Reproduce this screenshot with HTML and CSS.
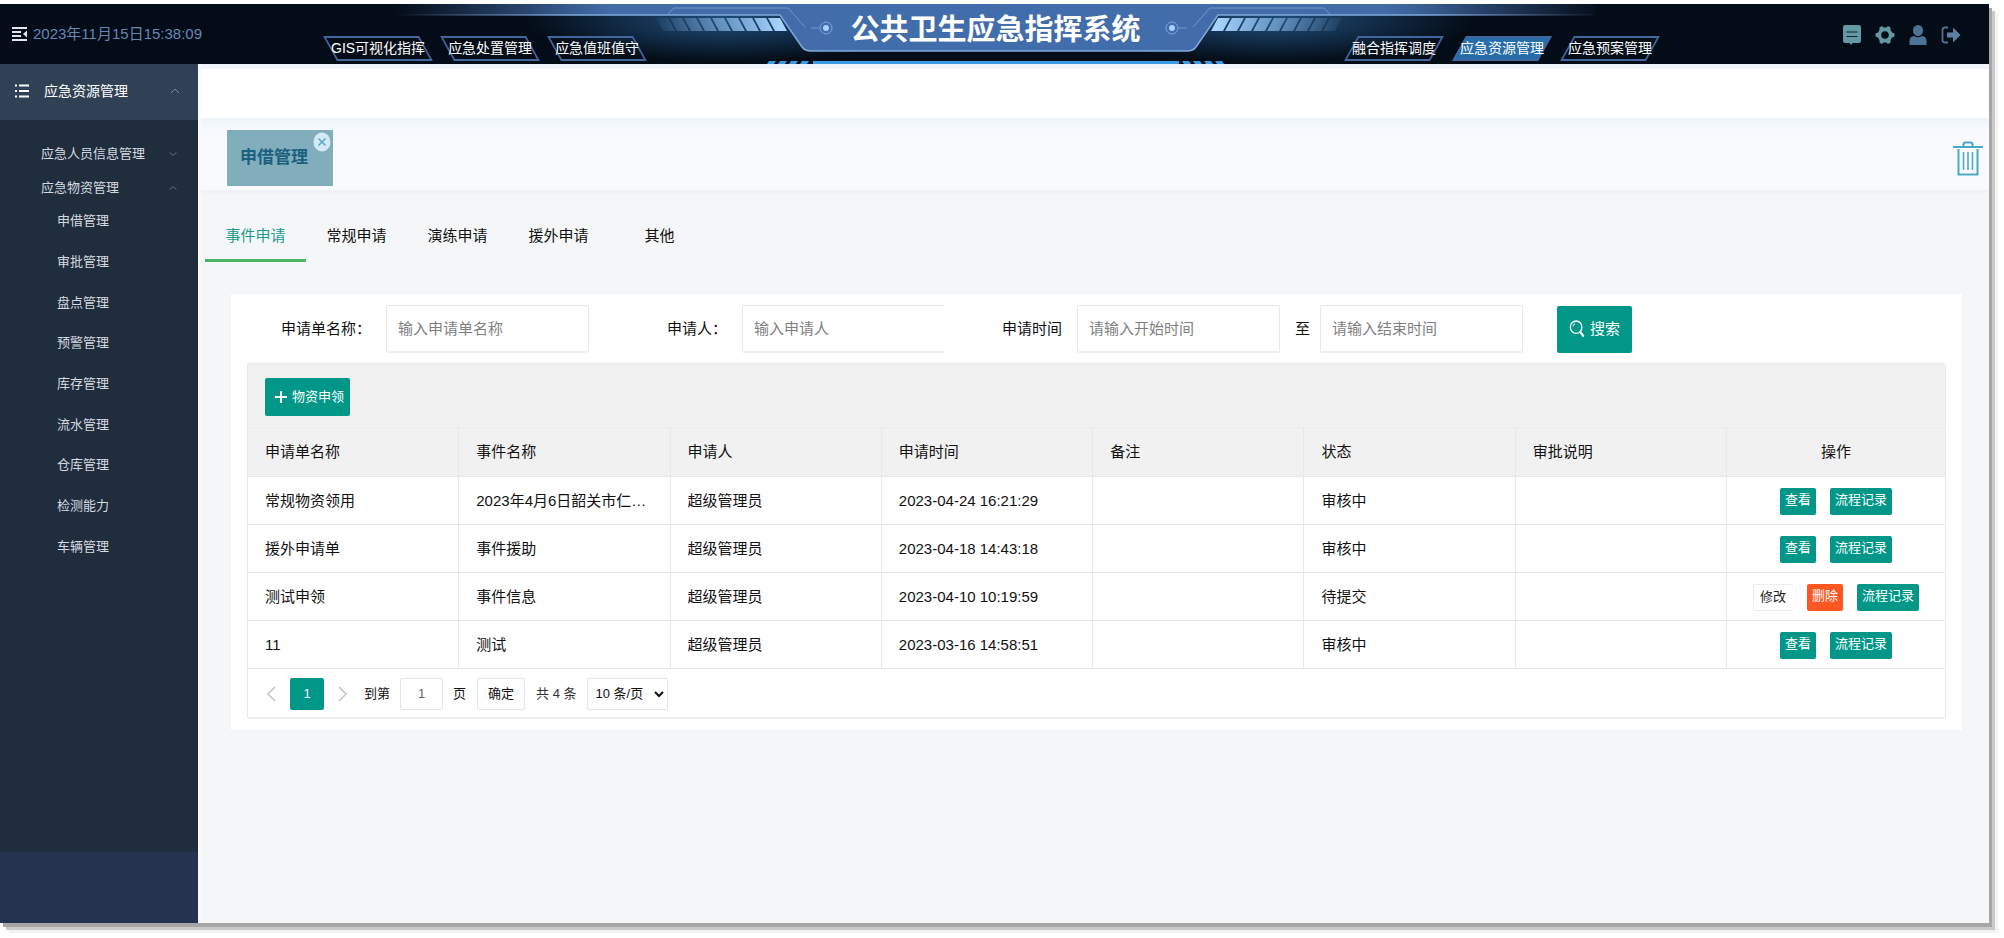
FILE: index.html
```html
<!DOCTYPE html>
<html lang="zh-CN">
<head>
<meta charset="utf-8">
<title>公共卫生应急指挥系统</title>
<link rel="stylesheet" href="styles.css">
</head>
<body>
<div class="frame">
  <header class="topbar">
    <svg class="topbar-art" viewBox="0 0 1200 60" width="1200" height="60" aria-hidden="true">
      <defs>
        <linearGradient id="band" gradientUnits="userSpaceOnUse" x1="0" y1="0" x2="604" y2="0">
          <stop offset="0" stop-color="#426ca8" stop-opacity="0"/>
          <stop offset=".36" stop-color="#426ca8"/>
          <stop offset="1" stop-color="#426dac"/>
        </linearGradient>
        <linearGradient id="edge" gradientUnits="userSpaceOnUse" x1="0" y1="0" x2="604" y2="0">
          <stop offset="0" stop-color="#7fa9dc" stop-opacity="0"/>
          <stop offset=".3" stop-color="#7fa9dc"/>
          <stop offset="1" stop-color="#7fa9dc"/>
        </linearGradient>
        <linearGradient id="bars" gradientUnits="userSpaceOnUse" x1="262" y1="0" x2="385" y2="0">
          <stop offset="0" stop-color="#8fc0f0" stop-opacity="0.05"/>
          <stop offset=".5" stop-color="#8fc0f0" stop-opacity=".6"/>
          <stop offset="1" stop-color="#a6d2ff"/>
        </linearGradient>
        <radialGradient id="glow">
          <stop offset="0" stop-color="#1f4d7a"/>
          <stop offset="1" stop-color="#1f4d7a" stop-opacity="0"/>
        </radialGradient>
        <g id="half">
          <ellipse cx="330" cy="16" rx="200" ry="42" fill="url(#glow)"/>
          <path d="M0 0H604V47H416Q410 47 407 43L385 11H0z" fill="url(#band)"/>
          <path d="M0 11H385L407 43Q410 47 416 47H604" fill="none" stroke="url(#edge)" stroke-width="1.5"/>
          <path d="M272 11L279 4H393L410 23M416 24H424" fill="none" stroke="#7199cd"/>
          <path d="M373 14h12l7 13h-12zM359 14h12l7 13h-12zM345 14h12l7 13h-12zM331 14h12l7 13h-12zM317 14h12l7 13h-12zM303 14h12l7 13h-12zM289 14h12l7 13h-12zM275 14h12l7 13h-12zM261 14h12l7 13h-12z" fill="url(#bars)"/>
          <circle cx="431" cy="24" r="6" fill="none" stroke="#7ba6da"/>
          <circle cx="431" cy="24" r="3" fill="#a6d2ff"/>
        </g>
      </defs>
      <use href="#half"/>
      <use href="#half" transform="translate(1208 0) scale(-1 1)"/>
      <path d="M418 57H784V60H418zM374 57h7l-2 3h-7zM385 57h7l-2 3h-7zM396 57h7l-2 3h-7zM407 57h7l-2 3h-7zM787 57h7l2 3h-7zM798 57h7l2 3h-7zM809 57h7l2 3h-7zM820 57h7l2 3h-7z" fill="#399ce2"/>
    </svg>
    <div class="clock">
      <button class="icon-btn" type="button" aria-label="收起菜单">
        <svg viewBox="0 0 16 14" width="16" height="14"><path d="M0 1H15M0 5H9M0 9H9M0 13H15" stroke="#dfe6ee" stroke-width="2"/><path d="M15 3.500V10.500L11 7z" fill="#dfe6ee"/></svg>
      </button>
      <time>2023年11月15日15:38:09</time>
    </div>
    <nav class="modules">
      <a class="module" href="#">GIS可视化指挥</a>
      <a class="module" href="#">应急处置管理</a>
      <a class="module" href="#">应急值班值守</a>
    </nav>
    <h1 class="title">公共卫生应急指挥系统</h1>
    <nav class="modules modules-right">
      <a class="module" href="#">融合指挥调度</a>
      <a class="module active" href="#">应急资源管理</a>
      <a class="module" href="#">应急预案管理</a>
    </nav>
    <div class="actions">
      <button class="icon-btn" type="button" aria-label="消息">
        <svg viewBox="0 0 20 20" width="20" height="20"><path d="M3 0H17Q19 0 19 2V16Q19 18 17 18H10.500L9 20L7.500 18H3Q1 18 1 16V2Q1 0 3 0z" fill="#6499a3"/><path d="M4.500 7H15.500M4.500 11.500H15.500" stroke="#0c2433" stroke-width="1.200"/></svg>
      </button>
      <button class="icon-btn" type="button" aria-label="设置">
        <svg viewBox="0 0 20 20" width="20" height="20"><path fill-rule="evenodd" d="M7 1L8.500 2.500H11.500L13 1L15.500 2.500V5L17 7.500L19.500 8.500V11.500L17 12.500L15.500 15V17.500L13 19L11.500 17.500H8.500L7 19L4.500 17.500V15L3 12.500L.5 11.500V8.500L3 7.500L4.500 5V2.500zM10 6.200A3.800 3.800 0 1 0 10 13.800A3.800 3.800 0 1 0 10 6.200z" fill="#6499a3"/></svg>
      </button>
      <button class="icon-btn" type="button" aria-label="用户">
        <svg viewBox="0 0 20 20" width="20" height="20"><ellipse cx="10" cy="5.500" rx="5" ry="5.500" fill="#4f7394"/><path d="M1.500 20V16Q1.500 11.500 6 11Q10 13.500 14 11Q18.500 11.500 18.500 16V20z" fill="#4f7394"/></svg>
      </button>
      <button class="icon-btn" type="button" aria-label="退出">
        <svg viewBox="0 0 20 20" width="20" height="20"><path d="M7 2.500H4Q1.500 2.500 1.500 5V15Q1.500 17.500 4 17.500H7" fill="none" stroke="#4f7394" stroke-width="1.800"/><path d="M6 7.500H12V2.500L19.500 10L12 17.500V12.500H6z" fill="#5a80a2"/></svg>
      </button>
    </div>
  </header>

  <div class="body">
    <aside class="sidebar">
      <button class="side-head" type="button">
        <svg viewBox="0 0 14 14" width="14" height="14"><path d="M0 1.500H2M0 7H2M0 12.500H2M4 1.500H14M4 7H14M4 12.500H14" stroke="#fff" stroke-width="2"/></svg>
        <span>应急资源管理</span>
        <svg class="chev" viewBox="0 0 10 6" width="10" height="6"><path d="M1 5L5 1L9 5"/></svg>
      </button>
      <nav class="side-menu">
        <a class="side-group" href="#">应急人员信息管理<svg class="chev" viewBox="0 0 10 6" width="8" height="6"><path d="M1 1L5 5L9 1"/></svg></a>
        <a class="side-group" href="#">应急物资管理<svg class="chev" viewBox="0 0 10 6" width="8" height="6"><path d="M1 5L5 1L9 5"/></svg></a>
        <div class="side-list">
          <a class="side-item" href="#">申借管理</a>
          <a class="side-item" href="#">审批管理</a>
          <a class="side-item" href="#">盘点管理</a>
          <a class="side-item" href="#">预警管理</a>
          <a class="side-item" href="#">库存管理</a>
          <a class="side-item" href="#">流水管理</a>
          <a class="side-item" href="#">仓库管理</a>
          <a class="side-item" href="#">检测能力</a>
          <a class="side-item" href="#">车辆管理</a>
        </div>
      </nav>
      <div class="side-foot"></div>
    </aside>

    <main class="main">
      <div class="banner"></div>
      <div class="page-tabs">
        <div class="page-tab">
          <span>申借管理</span>
          <button class="tab-close" type="button" aria-label="关闭"><svg viewBox="0 0 18 20" width="18" height="20"><ellipse cx="9" cy="10" rx="8.500" ry="9.500" fill="#d3e9f3"/><path d="M5.500 6.500L12.500 13.500M12.500 6.500L5.500 13.500" stroke="#5aa6c8" stroke-width="1.500"/></svg></button>
        </div>
        <button class="icon-btn" type="button" aria-label="清空">
          <svg viewBox="0 0 30 35" width="30" height="35" fill="none" stroke="#48a9c9" stroke-width="2"><path d="M0 6H30"/><path d="M10.500 6V3.500Q10.500 1.500 12.500 1.500H17.500Q19.500 1.500 19.500 3.500V6"/><path d="M5.500 8V33.500H24.500V8" /><path d="M10.500 11V29M15 11V29M19.500 11V29" stroke-width="1.500"/></svg>
        </button>
      </div>

      <nav class="tabs">
        <a class="tab active" href="#">事件申请</a>
        <a class="tab" href="#">常规申请</a>
        <a class="tab" href="#">演练申请</a>
        <a class="tab" href="#">援外申请</a>
        <a class="tab" href="#">其他</a>
      </nav>

      <section class="panel">
        <form class="search">
          <div class="field"><label for="f-name">申请单名称：</label><input id="f-name" type="text" placeholder="输入申请单名称"></div>
          <div class="field"><label for="f-user">申请人：</label><input id="f-user" class="open-end" type="text" placeholder="输入申请人"></div>
          <div class="field range"><label for="f-from">申请时间</label><input id="f-from" type="text" placeholder="请输入开始时间"><label class="to" for="f-to">至</label><input id="f-to" type="text" placeholder="请输入结束时间"></div>
          <button class="search-btn" type="button">
            <svg viewBox="0 0 18 20" width="16" height="20" fill="none" stroke="#fff"><ellipse cx="8" cy="8" rx="6.500" ry="7" stroke-width="1.500"/><path d="M4.500 7Q5 4.500 7 4" stroke-width="1"/><path d="M12.500 13L16.500 18.500" stroke-width="2.500"/></svg>
            <span>搜索</span>
          </button>
        </form>

        <div class="grid-box">
          <div class="toolbar">
            <button class="add-btn" type="button"><svg viewBox="0 0 14 14" width="14" height="14"><path d="M7 1V13M1 7H13" stroke="#fff" stroke-width="2"/></svg><span>物资申领</span></button>
          </div>
          <table class="grid">
            <colgroup><col><col><col><col><col><col><col><col class="col-ops"></colgroup>
            <thead>
              <tr><th>申请单名称</th><th>事件名称</th><th>申请人</th><th>申请时间</th><th>备注</th><th>状态</th><th>审批说明</th><th class="ops">操作</th></tr>
            </thead>
            <tbody>
              <tr><td>常规物资领用</td><td>2023年4月6日韶关市仁…</td><td>超级管理员</td><td>2023-04-24 16:21:29</td><td></td><td>审核中</td><td></td><td class="ops"><div class="btns"><button class="mini" type="button">查看</button><button class="mini" type="button">流程记录</button></div></td></tr>
              <tr><td>援外申请单</td><td>事件援助</td><td>超级管理员</td><td>2023-04-18 14:43:18</td><td></td><td>审核中</td><td></td><td class="ops"><div class="btns"><button class="mini" type="button">查看</button><button class="mini" type="button">流程记录</button></div></td></tr>
              <tr><td>测试申领</td><td>事件信息</td><td>超级管理员</td><td>2023-04-10 10:19:59</td><td></td><td>待提交</td><td></td><td class="ops"><div class="btns"><button class="mini plain" type="button">修改</button><button class="mini danger" type="button">删除</button><button class="mini" type="button">流程记录</button></div></td></tr>
              <tr><td>11</td><td>测试</td><td>超级管理员</td><td>2023-03-16 14:58:51</td><td></td><td>审核中</td><td></td><td class="ops"><div class="btns"><button class="mini" type="button">查看</button><button class="mini" type="button">流程记录</button></div></td></tr>
            </tbody>
          </table>
          <div class="pager">
            <button class="icon-btn arrow" type="button" aria-label="上一页"><svg viewBox="0 0 10 16" width="10" height="16"><path d="M9 1L2 8L9 15"/></svg></button>
            <button class="page-now" type="button">1</button>
            <button class="icon-btn arrow" type="button" aria-label="下一页"><svg viewBox="0 0 10 16" width="10" height="16"><path d="M1 1L8 8L1 15"/></svg></button>
            <label class="goto" for="p-no">到第</label>
            <input id="p-no" class="page-no" type="text" value="1">
            <span>页</span>
            <button class="go" type="button">确定</button>
            <span class="total">共 4 条</span>
            <select class="size" aria-label="每页条数"><option>10 条/页</option><option>20 条/页</option></select>
          </div>
        </div>
      </section>
    </main>
  </div>
</div>
</body>
</html>
```
FILE: styles.css
```css
* { box-sizing: border-box; }

body {
  margin: 0;
  background: #fff;
  color: #111;
  font-family: "Liberation Sans", "Noto Sans CJK SC", sans-serif;
  font-size: 15px;
  line-height: 20px;
}

a { color: inherit; text-decoration: none; }
button, input, select { font: inherit; color: inherit; }
button { padding: 0; border: 0; background: none; cursor: pointer; }
svg { display: block; flex: none; }

.frame {
  display: flex;
  flex-direction: column;
  min-height: calc(100vh - 19px);
  margin: 4px 15px 15px 0;
  box-shadow: 3px 4px 0 #a6a6a6, 6px 7px 0 #cacaca, 9px 10px 0 #f3f3f3;
}

/* top bar */
.topbar {
  position: relative;
  display: flex;
  height: 60px;
  overflow: hidden;
  background: #040c17;
}
.topbar-art {
  position: absolute;
  top: 0;
  left: 50%;
  margin-left: -600px;
}
.clock, .modules, .title, .actions { position: relative; }
.clock {
  display: flex;
  align-items: center;
  gap: 5px;
  width: 323px;
  padding-left: 12px;
  color: #6388b5;
}
.modules {
  display: flex;
  gap: 7px;
  padding-top: 32px;
}
.modules-right { gap: 8px; }
.module {
  position: relative;
  z-index: 0;
  height: 25px;
  padding: 0 8px;
  color: #fff;
  font-size: 14px;
  line-height: 24px;
  white-space: nowrap;
}
.module::before {
  content: "";
  position: absolute;
  inset: 0 7px;
  z-index: -1;
  border: 2px solid #41659c;
  transform: skewX(29deg);
}
.modules-right .module::before { transform: skewX(-29deg); }
.module.active::before { background: #266dac; }
.title {
  flex: 1;
  margin: 0;
  color: #fff;
  font-size: 29px;
  line-height: 52px;
  text-align: center;
  white-space: nowrap;
}
.actions {
  display: flex;
  align-items: center;
  justify-content: flex-end;
  gap: 13px;
  width: 329px;
  padding: 2px 28px 0 0;
}

/* sidebar */
.body { display: flex; flex: 1; }
.sidebar {
  display: flex;
  flex-direction: column;
  width: 198px;
  background: #202d3c;
  color: #d5dae0;
}
.side-head {
  display: flex;
  align-items: center;
  gap: 15px;
  height: 56px;
  padding: 0 18px 3px 15px;
  background: #304156;
  color: #fff;
  font-size: 14px;
}
.chev { margin-left: auto; fill: none; stroke: #7e8a98; }
.side-menu { flex: 1; padding-top: 17px; font-size: 13px; }
.side-group, .side-item { display: flex; align-items: center; }
.side-group { height: 34px; padding: 0 21px 0 41px; }
.side-list {
  display: grid;
  grid-auto-rows: 1fr;
  height: 366px;
  margin-top: -4px;
  padding-left: 57px;
}
.side-foot { height: 71px; background: #253350; }

/* main column */
.main {
  flex: 1;
  min-width: 0;
  background: #f5f6f8;
  border-left: 3px solid #f8faff;
}
.banner {
  height: 54px;
  border-top: 5px solid #eff4fd;
  background: #fff;
}
.page-tabs {
  display: flex;
  align-items: center;
  justify-content: space-between;
  height: 75px;
  padding: 12px 6px 4px 26px;
  border-bottom: 3px solid #f1f2f5;
  background: linear-gradient(#eff4fb, #f8fafe 14px);
}
.page-tab {
  position: relative;
  height: 56px;
  padding: 0 25px 0 13px;
  background: #81adbc;
  color: #1b607f;
  font-size: 17px;
  font-weight: bold;
  line-height: 56px;
}
.tab-close { position: absolute; top: 2px; right: 2px; }

.tabs { display: flex; padding: 18px 0 0 4px; }
.tab {
  width: 101px;
  height: 51px;
  border-bottom: 3px solid transparent;
  line-height: 50px;
  text-align: center;
}
.tab.active { border-color: #4bb566; color: #1a9c8d; }

.panel {
  margin: 32px 27px 0 30px;
  padding: 11px 16px 11px 16px;
  background: #fff;
}

/* search form */
.search {
  display: flex;
  align-items: center;
  margin-bottom: 10px;
  padding-left: 34px;
}
.field { display: flex; align-items: center; gap: 15px; margin-right: 78px; white-space: nowrap; }
.field:nth-child(2) { margin-right: 57px; }
.field.range { margin-right: 34px; }
.to { margin-right: -5px; }
.field input {
  width: 203px;
  min-width: 0;
  height: 48px;
  padding: 0 11px;
  border: 1px solid #e8e8e8;
  border-bottom: 2px solid #f0f0f0;
  border-radius: 2px;
  background: #fff;
}
.field .open-end { border-right-color: transparent; }
.field input::placeholder { color: #7f7f7f; }
.search-btn {
  display: flex;
  align-items: center;
  gap: 5px;
  height: 47px;
  padding: 0 12px;
  border-radius: 2px;
  background: #009688;
  color: #fff;
  white-space: nowrap;
}

/* data grid */
.grid-box { border: 1px solid #e9e9e9; border-bottom: 2px solid #efefef; border-radius: 3px; }
.toolbar {
  height: 63px;
  padding: 14px 17px;
  background: #f1f1f1;
}
.add-btn {
  display: flex;
  align-items: center;
  gap: 4px;
  height: 38px;
  padding: 0 6px 0 9px;
  border-radius: 2px;
  background: #009688;
  color: #fff;
  font-size: 13px;
}
.grid {
  width: 100%;
  border-collapse: separate;
  border-spacing: 0;
  table-layout: fixed;
}
.col-ops { width: 218px; }
.grid th, .grid td {
  height: 48px;
  padding: 0 14px 0 17px;
  overflow: hidden;
  border-right: 1px solid #e8e8e8;
  border-bottom: 1px solid #e6e6e6;
  font-weight: normal;
  text-align: left;
  text-overflow: ellipsis;
  white-space: nowrap;
}
.grid th { height: 50px; border-top: 1px solid #ebebeb; background: #f1f1f1; }
.grid .ops { padding: 0; border-right: 0; text-align: center; }
.btns { display: flex; justify-content: center; gap: 14px; padding-top: 1px; }
.mini {
  height: 27px;
  padding: 0 5px 3px;
  border-radius: 2px;
  background: #009688;
  color: #fff;
  font-size: 13px;
  line-height: 24px;
}
.mini.plain { padding: 0 6px 1px; border: 1px solid #ececec; border-right-color: transparent; background: #fff; color: #222; }
.mini.danger { background: #ff5722; }

.pager {
  display: flex;
  align-items: center;
  height: 48px;
  padding: 1px 18px 0;
  font-size: 13px;
}
.arrow { fill: none; stroke: #c4c4c4; stroke-width: 1.5px; }
.page-now {
  width: 34px;
  height: 32px;
  margin: 0 14px;
  border-radius: 2px;
  background: #009688;
  color: #fff;
}
.goto { margin-left: 16px; }
.page-no, .go, .size {
  height: 32px;
  border: 1px solid #e4e4e4;
  border-radius: 2px;
  background: #fff;
}
.page-no { width: 43px; margin: 0 10px; color: #666; text-align: center; }
.go { width: 48px; margin: 0 11px; }
.total { color: #333; }
.size { width: 81px; margin-left: 10px; padding: 0 4px; }
```
